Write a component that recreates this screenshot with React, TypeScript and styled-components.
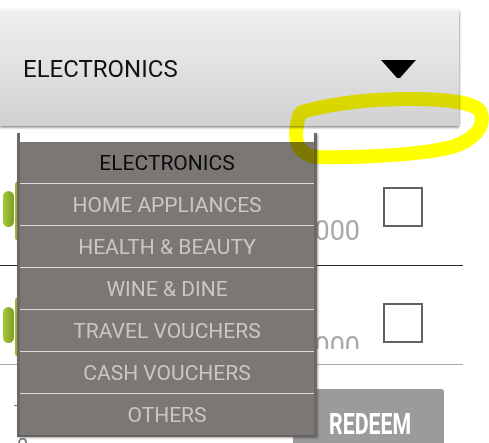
import React from "react";
import styled, { createGlobalStyle } from "styled-components";

const Global = createGlobalStyle`
  html, body { margin: 0; padding: 0; background: #fff; }
  body { font-family: Roboto, "Noto Sans", sans-serif; overflow: hidden; }
`;

const Page = styled.div`
  position: relative;
  width: 489px;
  height: 443px;
  overflow: hidden;
  background: #fff;
`;

const Spinner = styled.div`
  margin-top: 10px;
  margin-bottom: 2px;
  width: 459px;
  height: 116px;
  box-sizing: border-box;
  display: flex;
  align-items: center;
  justify-content: space-between;
  padding: 0 43px 0 23px;
  background: linear-gradient(#f1eff1, #d2d1d2);
  border-top: 1px solid #f6f5f6;
  box-shadow: 0 2px 2px rgba(0, 0, 0, 0.35), 1px 0 2px rgba(0, 0, 0, 0.2);
`;

const SpinnerLabel = styled.span`
  font-size: 24px;
  color: #111;
`;

const Row = styled.div<{ $h: number; $pt: number; $line: string }>`
  width: 463px;
  height: ${(p) => p.$h}px;
  box-sizing: border-box;
  display: flex;
  align-items: flex-start;
  padding: ${(p) => p.$pt}px 40px 0 0;
  border-bottom: 1px solid ${(p) => p.$line};
`;

const Icon = styled.svg`
  width: 36px;
  height: 60px;
  flex: none;
`;

const Points = styled.div<{ $clip?: number }>`
  flex: 1;
  margin: 34px 23px 0 0;
  text-align: right;
  font-size: 27px;
  line-height: 32px;
  color: #a9a9a9;
  overflow: hidden;
  height: ${(p) => (p.$clip ? `${p.$clip}px` : "auto")};
`;

const Check = styled.div`
  width: 40px;
  height: 40px;
  box-sizing: border-box;
  border: 2px solid #626262;
  margin-top: 6px;
  flex: none;
`;

const Footer = styled.div`
  width: 489px;
  display: flex;
  justify-content: space-between;
  padding-right: 45px;
  box-sizing: border-box;
`;

const Field = styled.div`
  margin: 40px 0 0 14px;
  display: flex;
  flex-direction: column;
  gap: 30px;
`;

const Tick = styled.div`
  width: 5px;
  height: 1px;
  background: #777;
`;

const FieldValue = styled.span`
  font-size: 20px;
  line-height: 20px;
  color: #777;
  margin-left: 3px;
`;

const Redeem = styled.div`
  margin-top: 24px;
  width: 151px;
  height: 60px;
  box-sizing: border-box;
  padding: 20px 0 0 36px;
  background: #9b9a9c;
  border-radius: 3px 3px 0 0;
`;

const RedeemText = styled.span`
  display: inline-block;
  font-size: 30px;
  line-height: 30px;
  font-weight: 700;
  color: #fff;
  transform: scaleX(0.71);
  transform-origin: left center;
`;

const Popup = styled.div`
  position: absolute;
  left: 17px;
  top: 133px;
  width: 300px;
  box-sizing: border-box;
  padding-top: 9px;
  background: #fff;
  border-left: 3px solid #6c6966;
  border-right: 3px solid #6c6966;
  border-bottom: 2px solid #65625f;
  box-shadow: 1px 1px 2px rgba(0, 0, 0, 0.35);
`;

const Options = styled.div`
  background: #7b7774;
`;

const Option = styled.div<{ $active?: boolean; $first?: boolean }>`
  height: ${(p) => (p.$first ? 41 : 42)}px;
  box-sizing: border-box;
  border-top: ${(p) => (p.$first ? "none" : "1px solid #dcdad8")};
  display: flex;
  align-items: center;
  justify-content: center;
  padding-top: 1px;
  font-size: 21px;
  color: ${(p) => (p.$active ? "#0b0b0b" : "#c9c7c5")};
`;

const Annotation = styled.svg`
  position: absolute;
  left: 0;
  top: 0;
  width: 489px;
  height: 443px;
  mix-blend-mode: multiply;
  pointer-events: none;
`;

const Android = () => (
  <Icon viewBox="0 0 36 60">
    <defs>
      <linearGradient id="arm" x1="0" x2="1" y1="0" y2="0">
        <stop offset="0" stopColor="#a6c93b" />
        <stop offset="1" stopColor="#7d9f22" />
      </linearGradient>
    </defs>
    <rect x="3" y="10" width="11" height="36" rx="5.5" fill="url(#arm)" />
    <rect x="15" y="0" width="21" height="60" rx="4" fill="#98b934" />
  </Icon>
);

const options = [
  "ELECTRONICS",
  "HOME APPLIANCES",
  "HEALTH & BEAUTY",
  "WINE & DINE",
  "TRAVEL VOUCHERS",
  "CASH VOUCHERS",
  "OTHERS",
];

export default function App() {
  return (
    <Page>
      <Global />
      <Spinner>
        <SpinnerLabel>ELECTRONICS</SpinnerLabel>
        <svg width="35" height="18" viewBox="0 0 35 18">
          <polygon points="0,0 35,0 19,18 16,18" fill="#000" />
        </svg>
      </Spinner>
      <Row $h={138} $pt={53} $line="#2a2a2a">
        <Android />
        <Points>5000</Points>
        <Check />
      </Row>
      <Row $h={99} $pt={31} $line="#a8a8a8">
        <Android />
        <Points $clip={18}>5000</Points>
        <Check />
      </Row>
      <Footer>
        <Field>
          <Tick />
          <FieldValue>0</FieldValue>
        </Field>
        <Redeem>
          <RedeemText>REDEEM</RedeemText>
        </Redeem>
      </Footer>
      <Popup>
        <Options>
          {options.map((o, i) => (
            <Option key={o} $active={i === 0} $first={i === 0}>
              {o}
            </Option>
          ))}
        </Options>
      </Popup>
      <Annotation viewBox="0 0 489 443">
        <path
          d="M 302 112 C 330 104, 370 99, 410 99 C 450 99, 478 103, 481 113 C 485 127, 474 140, 452 147 C 420 155, 360 158, 318 157 C 297 155, 294 140, 297 126 C 298 118, 299 114, 302 112 Z"
          fill="none"
          stroke="#ffff00"
          strokeWidth="14"
          strokeLinejoin="round"
        />
      </Annotation>
    </Page>
  );
}
